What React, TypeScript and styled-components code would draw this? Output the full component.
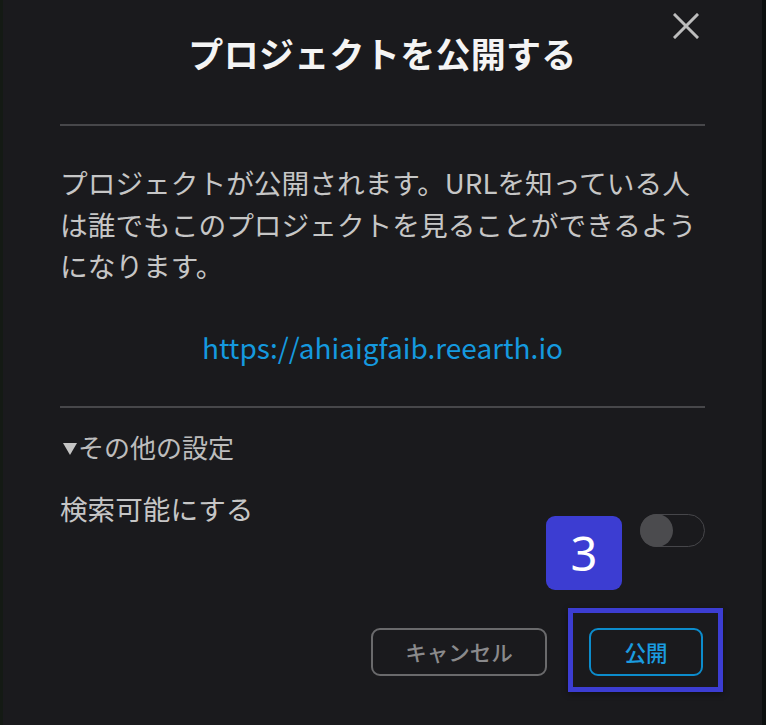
import React from "react";
import styled, { createGlobalStyle } from "styled-components";

const GlobalStyle = createGlobalStyle`
  html, body {
    margin: 0;
    padding: 0;
    background: #111513;
  }
  body {
    font-family: "Noto Sans CJK JP", "Noto Sans", sans-serif;
  }
  * { box-sizing: border-box; }
`;

const Page = styled.div`
  width: 766px;
  height: 725px;
  display: flex;
  background: linear-gradient(90deg, #141a14 0 3px, #1a1a1d 3px 762px, #0c0f0f 762px);
`;

const Dialog = styled.div`
  position: relative;
  width: 759px;
  height: 725px;
  margin-left: 3px;
  background: #1a1a1d;
  padding: 0 57px;
  display: flex;
  flex-direction: column;
`;

const Header = styled.div`
  position: relative;
  height: 124px;
  display: flex;
  align-items: flex-start;
  justify-content: center;
  padding-top: 28px;
`;

const Title = styled.h1`
  margin: 0;
  font-size: 35px;
  line-height: 50px;
  font-weight: 700;
  color: #f4f4f4;
  letter-spacing: 0.3px;
`;

const CloseButton = styled.button`
  position: absolute;
  top: 12px;
  right: 5px;
  width: 28px;
  height: 28px;
  padding: 0;
  border: none;
  background: transparent;
  display: flex;
  align-items: center;
  justify-content: center;
  cursor: pointer;
`;

const Divider = styled.hr`
  margin: 0;
  border: none;
  height: 2px;
  background: #47474a;
`;

const Description = styled.p`
  margin: 36px 0 0;
  font-size: 27.7px;
  line-height: 41.5px;
  color: #c6c6c6;
`;

const UrlLink = styled.a`
  display: block;
  margin: 42px 0 41px;
  text-align: center;
  font-family: "Noto Sans CJK JP", sans-serif;
  font-size: 28px;
  line-height: 36px;
  color: #1599df;
  text-decoration: none;
`;

const Disclosure = styled.div`
  margin-top: 24px;
  display: flex;
  align-items: center;
  font-size: 26px;
  line-height: 30px;
  color: #bdbdbd;
`;

const Caret = styled.span`
  display: inline-block;
  width: 0;
  height: 0;
  margin: 5px 1px 0 3px;
  border-left: 7px solid transparent;
  border-right: 7px solid transparent;
  border-top: 12px solid #c4c4c4;
`;

const SettingRow = styled.div`
  margin-top: 29px;
  display: flex;
  justify-content: space-between;
  align-items: flex-start;
`;

const SettingLabel = styled.span`
  font-size: 27.6px;
  line-height: 34px;
  color: #c6c6c6;
`;

const Toggle = styled.div`
  margin-top: 23px;
  width: 65px;
  height: 33px;
  border-radius: 17px;
  border: 1.5px solid #46464a;
  position: relative;
  display: flex;
  align-items: center;
`;

const Thumb = styled.span`
  width: 33px;
  height: 33px;
  margin-left: -1.5px;
  border-radius: 50%;
  background: #4b4b4e;
`;

const Footer = styled.div`
  margin-top: 81px;
  display: flex;
  justify-content: flex-end;
  gap: 42px;
  padding-right: 2px;
`;

const Button = styled.button<{ $primary?: boolean }>`
  height: 48px;
  width: ${(p) => (p.$primary ? "114px" : "176px")};
  border-radius: 9px;
  border: 2px solid ${(p) => (p.$primary ? "#0c8ccc" : "#6a6a6c")};
  background: transparent;
  color: ${(p) => (p.$primary ? "#1a9ce0" : "#8a8a8c")};
  font-family: "Noto Sans CJK JP", sans-serif;
  font-size: 21.5px;
  font-weight: 500;
  cursor: pointer;
`;

const StepBadge = styled.div`
  position: absolute;
  left: 543px;
  top: 516px;
  width: 76px;
  height: 74px;
  border-radius: 9px;
  background: #3c3dd2;
  color: #ffffff;
  font-family: "Noto Sans", sans-serif;
  font-size: 47px;
  line-height: 1;
  display: flex;
  align-items: center;
  justify-content: center;
`;

const Highlight = styled.div`
  position: absolute;
  left: 565px;
  top: 608px;
  width: 155px;
  height: 84px;
  border: 5px solid #3c3dd2;
  box-shadow: 0 2px 6px rgba(0, 0, 0, 0.4);
  pointer-events: none;
`;

export default function App() {
  return (
    <>
      <GlobalStyle />
      <Page>
        <Dialog>
          <Header>
            <Title>プロジェクトを公開する</Title>
            <CloseButton aria-label="close">
              <svg width="26" height="26" viewBox="0 0 26 26">
                <path d="M2 2 L24 24 M24 2 L2 24" stroke="#bdbdbd" strokeWidth="3" strokeLinecap="square" />
              </svg>
            </CloseButton>
          </Header>
          <Divider />
          <Description>
            プロジェクトが公開されます。URLを知っている人は誰でもこのプロジェクトを見ることができるようになります。
          </Description>
          <UrlLink href="#">https://ahiaigfaib.reearth.io</UrlLink>
          <Divider />
          <Disclosure>
            <Caret />
            その他の設定
          </Disclosure>
          <SettingRow>
            <SettingLabel>検索可能にする</SettingLabel>
            <Toggle>
              <Thumb />
            </Toggle>
          </SettingRow>
          <Footer>
            <Button>キャンセル</Button>
            <Button $primary>公開</Button>
          </Footer>
          <StepBadge>3</StepBadge>
          <Highlight />
        </Dialog>
      </Page>
    </>
  );
}
